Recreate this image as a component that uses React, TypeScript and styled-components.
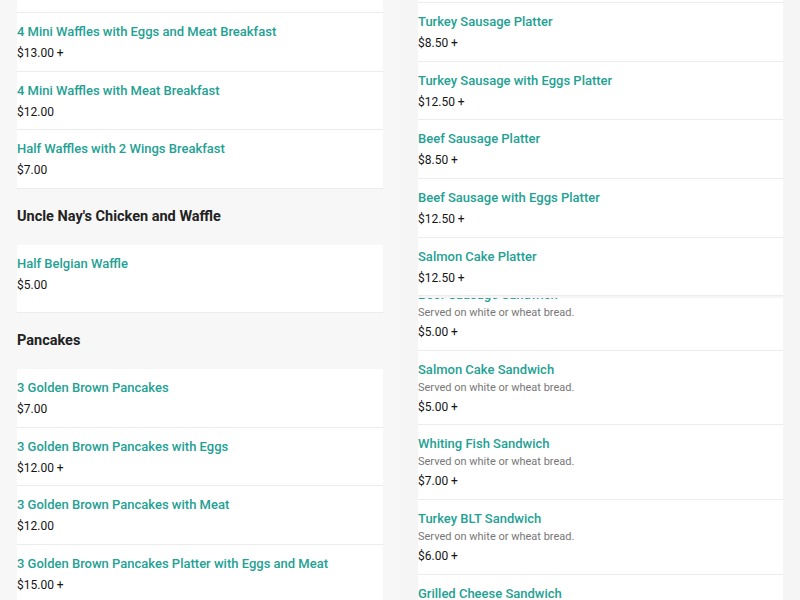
import React from "react";
import styled, { createGlobalStyle } from "styled-components";

const Global = createGlobalStyle`
  html, body { margin: 0; padding: 0; background: #f6f6f6; }
  body { font-family: Roboto, "Noto Sans", "Liberation Sans", sans-serif; -webkit-font-smoothing: antialiased; }
  * { box-sizing: border-box; }
`;

const Page = styled.main`
  display: grid;
  grid-template-columns: 400px 400px;
  grid-template-rows: 298px 302px;
  width: 800px;
  height: 600px;
  overflow: hidden;
  background: #f6f6f6;
`;

const Pane = styled.section<{ $side: "left" | "right" }>`
  overflow: hidden;
  padding: ${(p) => (p.$side === "left" ? "0 17px 0 17px" : "0 17px 0 18px")};
  background: ${(p) => (p.$side === "left" ? "#f7f7f7" : "#f5f5f5")};
`;

const List = styled.div<{ $offset?: number }>`
  margin-top: ${(p) => (p.$offset ? `${p.$offset}px` : "0")};
`;

const Tail = styled.div<{ $h: number }>`
  height: ${(p) => p.$h + 1}px;
  background: #fff;
  border-bottom: 1px solid #ececec;
`;

const Heading = styled.h2`
  margin: 0;
  padding: 18px 0;
  font-size: 14.5px;
  line-height: 20px;
  font-weight: 700;
  color: #222;
`;

const Card = styled.div`
  background: #fff;
`;

const Item = styled.div`
  padding: 9px 0 8.67px;
  border-bottom: 1px solid #ececec;
  background: #fff;
`;

const Title = styled.div`
  font-size: 13px;
  line-height: 20px;
  font-weight: 500;
  color: #23a193;
  white-space: nowrap;
`;

const Desc = styled.div`
  font-size: 11px;
  line-height: 16px;
  color: #777;
`;

const Price = styled.div`
  font-size: 12px;
  line-height: 20px;
  font-weight: 400;
  color: #151515;
  padding-top: 1px;
  margin-bottom: -1px;
`;

type MenuItem = { name: string; price: string; desc?: string };

const Entry = ({ item }: { item: MenuItem }) => (
  <Item>
    <Title>{item.name}</Title>
    {item.desc && <Desc>{item.desc}</Desc>}
    <Price>{item.price}</Price>
  </Item>
);

const waffles: MenuItem[] = [
  { name: "4 Mini Waffles with Eggs and Meat Breakfast", price: "$13.00 +" },
  { name: "4 Mini Waffles with Meat Breakfast", price: "$12.00" },
  { name: "Half Waffles with 2 Wings Breakfast", price: "$7.00" },
];

const chicken: MenuItem[] = [{ name: "Half Belgian Waffle", price: "$5.00" }];

const pancakes: MenuItem[] = [
  { name: "3 Golden Brown Pancakes", price: "$7.00" },
  { name: "3 Golden Brown Pancakes with Eggs", price: "$12.00 +" },
  { name: "3 Golden Brown Pancakes with Meat", price: "$12.00" },
  { name: "3 Golden Brown Pancakes Platter with Eggs and Meat", price: "$15.00 +" },
];

const platters: MenuItem[] = [
  { name: "Turkey Sausage Platter", price: "$8.50 +" },
  { name: "Turkey Sausage with Eggs Platter", price: "$12.50 +" },
  { name: "Beef Sausage Platter", price: "$8.50 +" },
  { name: "Beef Sausage with Eggs Platter", price: "$12.50 +" },
  { name: "Salmon Cake Platter", price: "$12.50 +" },
];

const bread = "Served on white or wheat bread.";
const sandwiches: MenuItem[] = [
  { name: "Beef Sausage Sandwich", desc: bread, price: "$5.00 +" },
  { name: "Salmon Cake Sandwich", desc: bread, price: "$5.00 +" },
  { name: "Whiting Fish Sandwich", desc: bread, price: "$7.00 +" },
  { name: "Turkey BLT Sandwich", desc: bread, price: "$6.00 +" },
  { name: "Grilled Cheese Sandwich", desc: bread, price: "$5.00 +" },
];

export default function App() {
  return (
    <>
      <Global />
      <Page>
        <Pane $side="left">
          <Tail $h={12} />
          {waffles.map((i) => (
            <Entry key={i.name} item={i} />
          ))}
          <Heading>Uncle Nay's Chicken and Waffle</Heading>
          <Card>
            {chicken.map((i) => (
              <Entry key={i.name} item={i} />
            ))}
          </Card>
        </Pane>
        <Pane $side="right">
          <Tail $h={2} />
          {platters.map((i) => (
            <Entry key={i.name} item={i} />
          ))}
        </Pane>
        <Pane $side="left">
          <Tail $h={14} />
          <Heading>Pancakes</Heading>
          <Card>
            {pancakes.map((i) => (
              <Entry key={i.name} item={i} />
            ))}
          </Card>
        </Pane>
        <Pane $side="right">
          <List $offset={-22}>
            {sandwiches.map((i) => (
              <Entry key={i.name} item={i} />
            ))}
          </List>
        </Pane>
      </Page>
    </>
  );
}
